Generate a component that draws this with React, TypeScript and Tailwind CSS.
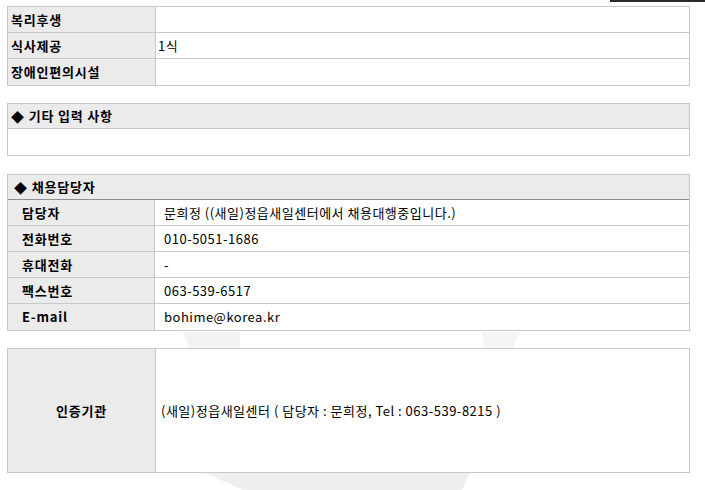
import { FC, ReactNode } from 'react'

const font = { fontFamily: '"Noto Sans CJK KR", "Liberation Sans", sans-serif' }

interface RowProps {
  label: string
  value?: ReactNode
  last?: boolean
}

// top info table: labels left, tight padding
const InfoRow: FC<RowProps> = ({ label, value, last }) => (
  <div className={`flex h-[26px] ${last ? '' : 'border-b border-[#c9c9c9]'}`}>
    <div className="w-[148px] shrink-0 bg-[#ebebeb] border-r border-[#c9c9c9] flex items-center pl-[3px] text-[13px] tracking-[0.8px] font-bold text-black">
      {label}
    </div>
    <div className="flex-1 flex items-center pl-[2px] text-[13px] tracking-[0.5px] text-black">{value}</div>
  </div>
)

// contact table: indented labels
const ContactRow: FC<RowProps> = ({ label, value, last }) => (
  <div className={`flex h-[26px] ${last ? '' : 'border-b border-[#c9c9c9]'}`}>
    <div className="w-[147px] shrink-0 bg-[#ebebeb] border-r border-[#c9c9c9] flex items-center pl-[14px] text-[13px] tracking-[0.8px] font-bold text-black">
      {label}
    </div>
    <div className="flex-1 flex items-center pl-[9px] text-[13px] tracking-[0.5px] text-black">{value}</div>
  </div>
)

const SectionHeader: FC<{ title: string; indent: string; dark?: boolean }> = ({ title, indent, dark }) => (
  <div
    className={`h-[25px] bg-[#ebebeb] flex items-center text-[13px] tracking-[0.8px] font-bold text-black border-b ${
      dark ? 'border-[#8f8f8f]' : 'border-[#c9c9c9]'
    } ${indent}`}
  >
    <span className="mr-[4px] text-[13px] leading-none">◆</span>
    {title}
  </div>
)

export default function App() {
  return (
    <div className="relative w-[705px] h-[490px] bg-white overflow-hidden" style={font}>
      {/* faint watermark behind the tables */}
      <svg className="absolute left-0 top-0" width="705" height="490" viewBox="0 0 705 490">
        <polygon points="183,332 240,332 240,350 190,350" fill="#f2f2f2" />
        <polygon points="482,332 520,332 512,350 484,350" fill="#f5f5f5" />
        <polygon points="205,473 470,473 462,490 243,490" fill="#efefef" />
      </svg>

      <div className="relative">
        {/* cut-off control at top right */}
        <div className="flex justify-end">
          <div className="w-[95px] h-[2px] bg-[#2a2a2a]" />
        </div>

        <div className="pl-[7px] pt-[4px] w-[690px] flex flex-col">
          {/* 복리후생 / 식사제공 / 장애인편의시설 */}
          <div className="border border-[#c9c9c9] bg-white">
            <InfoRow label="복리후생" />
            <InfoRow label="식사제공" value="1식" />
            <InfoRow label="장애인편의시설" last />
          </div>

          {/* 기타 입력 사항 */}
          <div className="mt-[17px] border border-[#c9c9c9] bg-white">
            <SectionHeader title="기타 입력 사항" indent="pl-[3px]" />
            <div className="h-[26px]" />
          </div>

          {/* 채용담당자 */}
          <div className="mt-[18px] border border-[#c9c9c9] bg-white">
            <SectionHeader title="채용담당자" indent="pl-[6px]" dark />
            <ContactRow label="담당자" value="문희정 ((새일)정읍새일센터에서 채용대행중입니다.)" />
            <ContactRow label="전화번호" value="010-5051-1686" />
            <ContactRow label="휴대전화" value="-" />
            <ContactRow label="팩스번호" value="063-539-6517" />
            <ContactRow label="E-mail" value="bohime@korea.kr" last />
          </div>

          {/* 인증기관 */}
          <div className="mt-[17px] border border-[#c9c9c9] bg-white flex h-[125px]">
            <div className="w-[148px] shrink-0 bg-[#ebebeb] border-r border-[#c9c9c9] flex items-center justify-center text-[13px] tracking-[0.8px] font-bold text-black">
              인증기관
            </div>
            <div className="flex-1 flex items-center pl-[5px] text-[13px] tracking-[0.5px] text-black">
              (새일)정읍새일센터 ( 담당자 : 문희정, Tel : 063-539-8215 )
            </div>
          </div>
        </div>
      </div>
    </div>
  )
}
